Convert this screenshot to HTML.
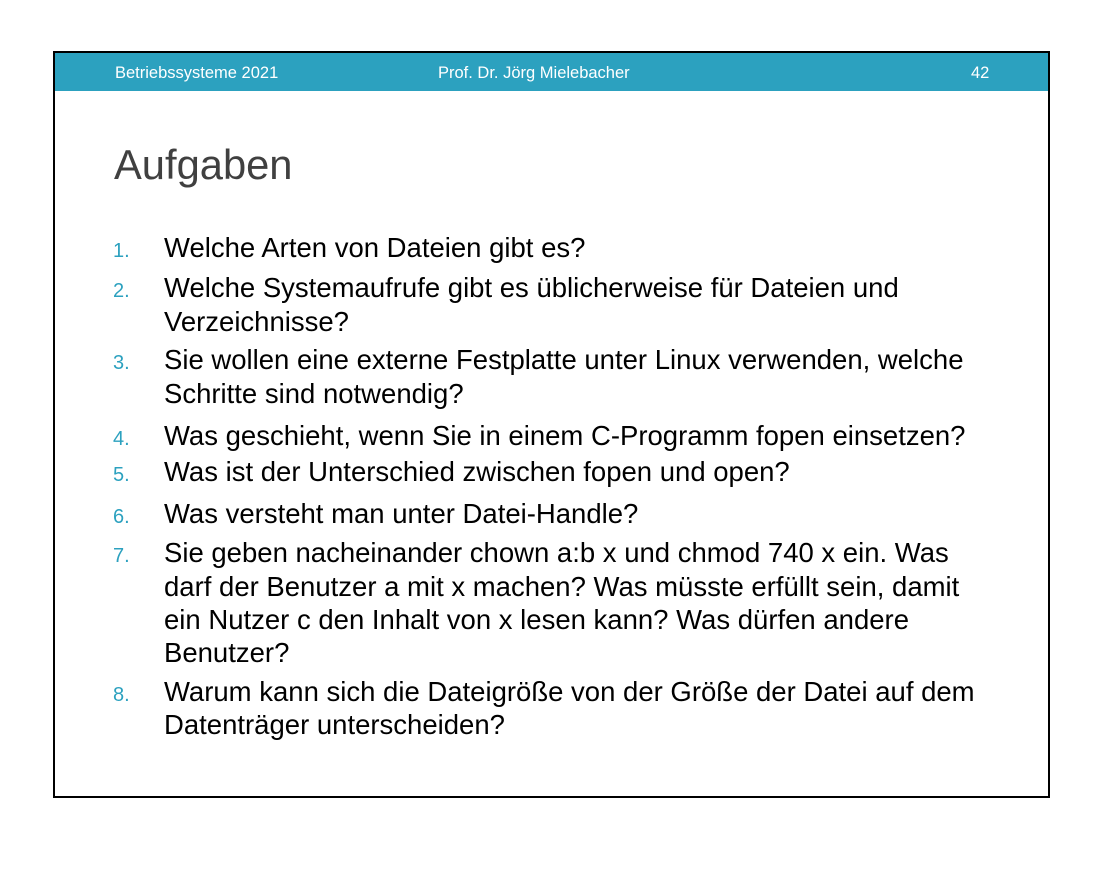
<!DOCTYPE html>
<html><head><meta charset="utf-8"><style>
body{margin:0;width:1099px;height:871px;background:#fff;position:relative;overflow:hidden;font-family:"Liberation Sans",Arial,sans-serif}
.frame{position:absolute;left:53px;top:51px;width:993px;height:743px;border:2px solid #000}
.bar{position:absolute;left:55px;top:53px;width:993px;height:38px;background:#2ca1bf}
.h{position:absolute;color:#fff;font-size:16.5px;line-height:38px;top:54px}
.t{position:absolute;left:114px;top:140px;font-size:41.7px;line-height:50px;color:#404040}
.l{position:absolute;left:113px;font-size:27.5px;line-height:34px;height:34px;color:#000;white-space:nowrap}
.l .n{display:inline-block;width:51px;font-size:20px;color:#2ca1bf}
.l.c{left:164px}
</style></head><body>
<div class="frame"></div><div class="bar"></div>
<div class="h" style="left:115px">Betriebssysteme 2021</div>
<div class="h" style="left:438px">Prof. Dr. Jörg Mielebacher</div>
<div class="h" style="left:971px">42</div>
<div class="t">Aufgaben</div>
<div class="l" style="top:231px"><span class="n">1.</span>Welche Arten von Dateien gibt es?</div>
<div class="l" style="top:271px"><span class="n">2.</span>Welche Systemaufrufe gibt es üblicherweise für Dateien und</div>
<div class="l c" style="top:305px">Verzeichnisse?</div>
<div class="l" style="top:343px"><span class="n">3.</span>Sie wollen eine externe Festplatte unter Linux verwenden, welche</div>
<div class="l c" style="top:377px">Schritte sind notwendig?</div>
<div class="l" style="top:419px"><span class="n">4.</span>Was geschieht, wenn Sie in einem C-Programm fopen einsetzen?</div>
<div class="l" style="top:455px"><span class="n">5.</span>Was ist der Unterschied zwischen fopen und open?</div>
<div class="l" style="top:497px"><span class="n">6.</span>Was versteht man unter Datei-Handle?</div>
<div class="l" style="top:536px"><span class="n">7.</span>Sie geben nacheinander chown a:b x und chmod 740 x ein. Was</div>
<div class="l c" style="top:570px">darf der Benutzer a mit x machen? Was müsste erfüllt sein, damit</div>
<div class="l c" style="top:603px">ein Nutzer c den Inhalt von x lesen kann? Was dürfen andere</div>
<div class="l c" style="top:636px">Benutzer?</div>
<div class="l" style="top:675px"><span class="n">8.</span>Warum kann sich die Dateigröße von der Größe der Datei auf dem</div>
<div class="l c" style="top:708px">Datenträger unterscheiden?</div>
</body></html>
